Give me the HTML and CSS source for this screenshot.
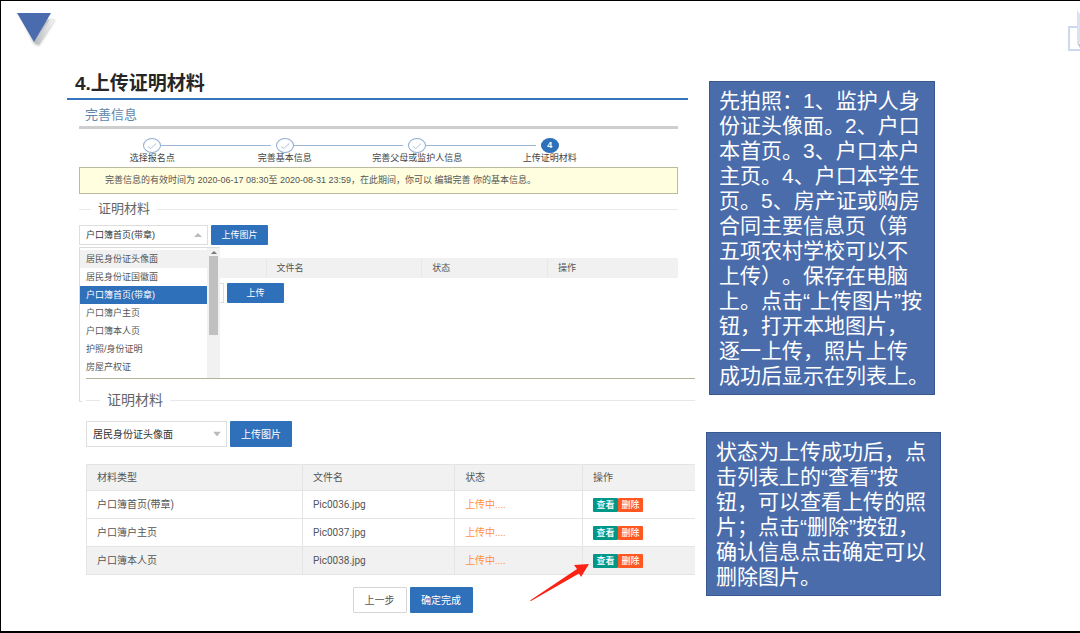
FILE: index.html
```html
<!DOCTYPE html>
<html lang="zh-CN">
<head>
<meta charset="utf-8">
<title>上传证明材料</title>
<link rel="stylesheet" href="styles.css">
</head>
<body>
<div class="slide">
  <header class="slide-top">
    <svg class="marker" width="44" height="40" viewBox="0 0 44 40" aria-hidden="true">
      <defs>
        <linearGradient id="fold" x1="0" y1="0" x2="1" y2="0"><stop offset="0" stop-color="#b4b6ba"/><stop offset="1" stop-color="#f4f4f5"/></linearGradient>
        <filter id="soft" x="-20%" y="-20%" width="150%" height="150%"><feGaussianBlur stdDeviation="1"/></filter>
      </defs>
      <path d="M7 7L41 10L25 36L20 34Z" fill="#b0b2b6" filter="url(#soft)" opacity=".8"/>
      <path d="M37 8L40 11L25 35L20 32Z" fill="url(#fold)"/>
      <path d="M3 3H37L20 32Z" fill="#4a6cae"/>
    </svg>
    <svg class="corner" width="14" height="42" viewBox="0 0 14 42" aria-hidden="true">
      <path d="M14 17H3V40H14" fill="none" stroke="#ccd8f0" stroke-width="2"/>
      <path d="M14 34L11 33L14 38Z" fill="#c2c4c8"/>
      <path d="M11 0L14 4V33H11Z" fill="#dae2f2"/>
    </svg>
  </header>

  <main class="columns">
    <div class="work">
      <h1 class="title">4.上传证明材料</h1>

      <section class="first">
        <h2 class="section-name">完善信息</h2>
        <ol class="steps">
          <li class="step"><span class="dot"><svg viewBox="0 0 12 9" width="10" height="8"><path d="M1 5L4.500 7.500L11 1.500"/></svg></span><span>选择报名点</span></li>
          <li class="step"><span class="dot"><svg viewBox="0 0 12 9" width="10" height="8"><path d="M1 5L4.500 7.500L11 1.500"/></svg></span><span>完善基本信息</span></li>
          <li class="step"><span class="dot"><svg viewBox="0 0 12 9" width="10" height="8"><path d="M1 5L4.500 7.500L11 1.500"/></svg></span><span>完善父母或监护人信息</span></li>
          <li class="step"><span class="dot dot-now">4</span><span>上传证明材料</span></li>
        </ol>
        <p class="notice">完善信息的有效时间为 2020-06-17 08:30至 2020-08-31 23:59，在此期间，你可以 编辑完善 你的基本信息。</p>
        <h3 class="legend">证明材料</h3>
        <div class="picker">
          <div class="combo">
            <select class="select" aria-label="材料类型"><option>户口簿首页(带章)</option></select>
            <svg class="caret" width="8" height="4" viewBox="0 0 8 4"><path d="M0 4L4 0L8 4Z"/></svg>
            <div class="menu">
              <ul class="options" role="listbox" aria-label="材料类型">
                <li class="hover" role="option">居民身份证头像面</li>
                <li role="option">居民身份证国徽面</li>
                <li class="selected" role="option" aria-selected="true">户口簿首页(带章)</li>
                <li role="option">户口簿户主页</li>
                <li role="option">户口簿本人页</li>
                <li role="option">护照/身份证明</li>
                <li role="option">房屋产权证</li>
              </ul>
              <div class="scroll"><svg width="6" height="3" viewBox="0 0 6 3"><path d="M0 3L3 0L6 3Z" fill="#777"/></svg><span class="thumb"></span></div>
            </div>
          </div>
          <button class="btn" type="button">上传图片</button>
        </div>
        <table class="files-head">
          <thead><tr><th></th><th>文件名</th><th>状态</th><th>操作</th></tr></thead>
        </table>
        <div class="upload">
          <input class="path" type="text" aria-label="文件">
          <button class="btn" type="button">上传</button>
        </div>
      </section>

      <section class="second">
        <h3 class="legend legend-large">证明材料</h3>
        <div class="picker">
          <div class="combo">
            <select class="select" aria-label="证明材料类型"><option>居民身份证头像面</option></select>
            <svg class="caret" width="8" height="5" viewBox="0 0 8 5"><path d="M0 0H8L4 5Z"/></svg>
          </div>
          <button class="btn" type="button">上传图片</button>
        </div>
        <div class="list">
          <table class="files">
            <thead><tr><th>材料类型</th><th>文件名</th><th>状态</th><th>操作</th></tr></thead>
            <tbody>
              <tr><td>户口簿首页(带章)</td><td>Pic0036.jpg</td><td class="state">上传中....</td><td><div class="ops"><button class="view" type="button">查看</button><button class="remove" type="button">删除</button></div></td></tr>
              <tr><td>户口簿户主页</td><td>Pic0037.jpg</td><td class="state">上传中....</td><td><div class="ops"><button class="view" type="button">查看</button><button class="remove" type="button">删除</button></div></td></tr>
              <tr class="active"><td>户口簿本人页</td><td>Pic0038.jpg</td><td class="state">上传中....</td><td><div class="ops"><button class="view" type="button">查看</button><button class="remove" type="button">删除</button></div></td></tr>
            </tbody>
          </table>
          <svg class="arrow" width="62" height="40" viewBox="0 0 62 40" aria-hidden="true"><path d="M1 37.500L48 6L45 2L60 1L52 14L50 10.500L2 38Z" fill="#fb2414"/></svg>
        </div>
        <div class="actions">
          <button class="btn btn-plain" type="button">上一步</button>
          <button class="btn" type="button">确定完成</button>
        </div>
      </section>
    </div>

    <aside class="notes">
      <p class="note">先拍照：1、监护人身<br>份证头像面。2、户口<br>本首页。3、户口本户<br>主页。4、户口本学生<br>页。5、房产证或购房<br>合同主要信息页（第<br>五项农村学校可以不<br>上传）。保存在电脑<br>上。点击“上传图片”按<br>钮，打开本地图片，<br>逐一上传，照片上传<br>成功后显示在列表上。</p>
      <p class="note note-wide">状态为上传成功后，点<br>击列表上的“查看”按<br>钮，可以查看上传的照<br>片；点击“删除”按钮，<br>确认信息点击确定可以<br>删除图片。</p>
    </aside>
  </main>
</div>
</body>
</html>
```
FILE: styles.css
```css
* { box-sizing: border-box; }

body {
  margin: 0;
  background: #fff;
  color: #555;
  font: 9px/11px "Liberation Sans", "Noto Sans CJK SC", sans-serif;
  text-spacing-trim: space-all;
}

h1, h2, h3, p, ol, ul { margin: 0; padding: 0; }
ol, ul { list-style: none; }
button, select, input { font: inherit; margin: 0; }

.slide {
  min-height: 100vh;
  border: solid #000;
  border-width: 1px 0 2px 1px;
}

.slide-top {
  display: flex;
  justify-content: space-between;
  height: 68px;
  padding: 9px 0 0 13px;
}

.columns {
  display: grid;
  grid-template-columns: minmax(0, 628fr) minmax(0, 235fr);
  column-gap: 11px;
  padding: 0 139px 0 66px;
}

.title {
  height: 31px;
  margin-right: 7px;
  padding-left: 8px;
  border-bottom: 2px solid #3674bd;
  color: #262626;
  font-size: 19px;
  line-height: 29px;
}

.first {
  height: 278px;
  padding: 0 17px 0 12px;
}

.section-name {
  padding: 4px 0 0 6px;
  border-bottom: 3px solid #cecece;
  color: #5f87ab;
  font-size: 13px;
  font-weight: 400;
  line-height: 22px;
}

.steps {
  display: grid;
  grid-template-columns: repeat(4, 1fr);
  padding: 9px 62px 3px 7px;
  color: #444;
}

.step {
  position: relative;
  display: flex;
  flex-direction: column;
  align-items: center;
  white-space: nowrap;
}

.step:not(:last-child)::after {
  content: "";
  position: absolute;
  top: 7px;
  left: calc(50% + 9px);
  right: calc(-50% + 14px);
  height: 1px;
  background: #9db8d4;
}

.dot {
  display: flex;
  align-items: center;
  justify-content: center;
  width: 18px;
  height: 15px;
  border: 1px solid #8fadd0;
  border-radius: 50%;
}

.dot path { fill: none; stroke: #9db8d4; stroke-width: 1; }

.dot-now {
  border-color: #2f70bb;
  background: #2f70bb;
  color: #fff;
  font-weight: 700;
}

.notice {
  padding: 0 25px;
  border: 1px solid #babaa0;
  background: #ffffdf;
  color: #555;
  line-height: 25px;
}

.legend {
  display: flex;
  align-items: center;
  gap: 7px;
  margin: 7px 0 8px;
  color: #666;
  font-size: 13px;
  font-weight: 400;
  line-height: 16px;
}

.legend::before,
.legend::after {
  content: "";
  height: 1px;
  background: #e8e8e8;
}

.legend::before { width: 12px; }
.legend::after { flex: 1; }

.legend-large { margin: 0 0 13px; font-size: 14px; }
.legend-large::before { width: 14px; }

.picker, .upload, .actions { display: flex; gap: 3px; }

.combo { position: relative; width: 129px; }

.select {
  display: block;
  width: 100%;
  height: 20px;
  padding: 0 6px;
  appearance: none;
  border: 1px solid #dedede;
  border-radius: 0;
  background: #fff;
  color: #333;
}

.caret {
  position: absolute;
  top: 50%;
  right: 6px;
  transform: translateY(-50%);
  fill: #bbb;
}

.btn {
  width: 57px;
  height: 20px;
  padding: 0;
  border: 0;
  border-radius: 1px;
  background: #2f70bb;
  color: #fff;
}

.menu {
  position: absolute;
  z-index: 1;
  top: 22px;
  left: 0;
  display: flex;
  width: 141px;
  height: 155px;
  border: 1px solid #dcdcdc;
  border-right: 0;
  background: #fff;
}

.options { flex: 1; padding-top: 2px; }
.options li { padding-left: 6px; line-height: 18px; }
.options .hover { background: #f1f1f1; }
.options .selected { background: #2f70bb; color: #fff; }

.scroll {
  display: flex;
  flex-direction: column;
  align-items: center;
  gap: 2px;
  width: 13px;
  padding-top: 3px;
  background: #f1f1f1;
}

.thumb { width: 9px; height: 79px; background: #c0c0c0; }

.files-head {
  width: 100%;
  height: 20px;
  margin: 13px 0 5px;
  border-collapse: collapse;
  table-layout: fixed;
  background: #f1f1f1;
}

.files-head th {
  padding: 0 10px;
  border-right: 1px solid #e8e8e8;
  font-weight: 400;
  text-align: left;
}

.files-head th:last-child { border-right: 0; }
.files-head th:nth-child(1) { width: 187px; }
.files-head th:nth-child(2) { width: 26%; }
.files-head th:nth-child(3) { width: 21%; }

.path { width: 145px; height: 20px; border: 1px solid #dedede; }

.second {
  position: relative;
  z-index: 2;
  margin-left: 15px;
  padding-left: 4px;
  background: #fff;
  font-size: 10px;
}

.second::before {
  content: "";
  display: block;
  height: 13px;
  border-top: 1px solid #b3b39a;
}

.second .combo { width: 141px; }
.second .select, .second .btn { height: 26px; }
.second .btn { width: 62px; }

.list { position: relative; margin: 17px 0 12px; }

.files {
  width: 100%;
  border-collapse: collapse;
  table-layout: fixed;
  font-family: Roboto, "Noto Sans CJK SC", sans-serif;
}

.files th, .files td {
  height: 28px;
  padding: 0 10px;
  border: 1px solid #e4e4e4;
  border-right: 0;
  font-weight: 400;
  text-align: left;
}

.files th { height: 26px; }
.files thead, .files .active { background: #f1f1f1; }
.files th:nth-child(1) { width: 216px; }
.files th:nth-child(2) { width: 25%; }
.files th:nth-child(3) { width: 21%; }
.files .state { color: #ff9040; }

.ops { display: flex; }

.ops button {
  width: 25px;
  height: 14px;
  padding: 0;
  border: 0;
  border-radius: 1px;
  color: #fff;
  font-size: 9px;
  font-weight: 500;
  line-height: 14px;
}

.view { background: #009688; }
.remove { background: #ff5722; }

.arrow { position: absolute; right: 104px; bottom: -28px; }

.actions { justify-content: center; padding-left: 44px; }
.actions .btn { width: 63px; }

.second .btn-plain {
  width: 54px;
  border: 1px solid #d5d5d5;
  background: #fff;
  color: #555;
}

.notes { padding-top: 12px; }

.note {
  margin: 0 6px 37px 3px;
  padding: 6px 0 6px 9px;
  border: 1px solid #38588f;
  background: #4a6cab;
  color: #fff;
  font-size: 21px;
  line-height: 25px;
  white-space: nowrap;
}

.note-wide { margin: 0; }
```
